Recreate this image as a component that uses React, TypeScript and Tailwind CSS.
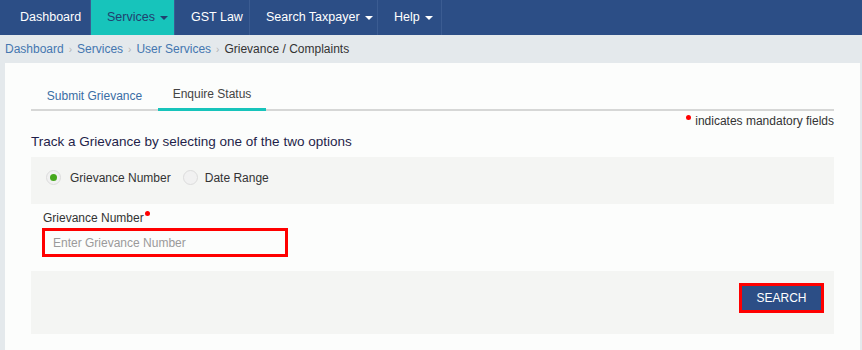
const navItems = [
  { label: 'Dashboard', width: 'w-[91px] pl-[20px]', caret: false, active: false },
  { label: 'Services', width: 'w-[84px] pl-[16px]', caret: true, active: true },
  { label: 'GST Law', width: 'w-[75px] pl-[16px]', caret: false, active: false },
  { label: 'Search Taxpayer', width: 'w-[128px] pl-[16px]', caret: true, active: false },
  { label: 'Help', width: 'w-[64px] pl-[16px]', caret: true, active: false },
];

const crumbs = ['Dashboard', 'Services', 'User Services'];

function Caret() {
  return <span className="ml-[5px] inline-block h-0 w-0 border-x-[4px] border-t-[4px] border-x-transparent border-t-current align-middle" />;
}

function Radio({ checked }: { checked?: boolean }) {
  return (
    <span className="flex h-[15px] w-[15px] items-center justify-center rounded-full border border-[#dcdcdc] bg-[#f1f1f1]">
      {checked && <span className="h-[7px] w-[7px] rounded-full bg-[#45a81c]" />}
    </span>
  );
}

function RedDot() {
  return <span className="block h-[5px] w-[5px] rounded-full bg-[#ff0000]" />;
}

export default function App() {
  return (
    <div className="min-h-[350px] bg-[#e4e9ec] font-['Liberation_Sans',Arial,sans-serif] text-[12px]">
      <nav className="flex h-[35px] bg-[#2c4e86] text-[12.5px] text-white">
        {navItems.map((item) => (
          <div
            key={item.label}
            className={`flex ${item.width} items-center border-r border-[#3b5c92] ${item.active ? 'bg-[#17c4bb] text-[#21406f]' : ''}`}
          >
            {item.label}
            {item.caret && <Caret />}
          </div>
        ))}
      </nav>

      <div className="flex h-[28px] items-center px-[5px] text-[12px]">
        {crumbs.map((c) => (
          <span key={c} className="flex items-center">
            <span className="text-[#4577b0]">{c}</span>
            <span className="mx-[5px] text-[10px] text-[#b5b5b5]">›</span>
          </span>
        ))}
        <span className="text-[#333]">Grievance / Complaints</span>
      </div>

      <div className="ml-[5px] mr-[2px] bg-[#fcfdfc] px-[26px] pb-[16px] pt-[17px]">
        <div className="flex h-[31px] border-b-2 border-[#d6d7d6] text-[12px]">
          <div className="flex w-[127px] items-center justify-center pt-[2px] text-[#3a6ea5]">Submit Grievance</div>
          <div className="-mb-[2px] flex w-[108px] items-center justify-center border-b-[3px] border-[#17c4bb] text-[#444]">
            Enquire Status
          </div>
        </div>

        <div className="mt-[3px] flex items-start justify-end gap-[4px] text-[12px] leading-[15px] text-[#333]">
          <span className="pt-[1px]">
            <RedDot />
          </span>
          indicates mandatory fields
        </div>

        <div className="mt-[4px] text-[13.5px] leading-[17px] text-[#1f1f4a]">Track a Grievance by selecting one of the two options</div>

        <div className="mt-[7px] flex h-[47px] items-center bg-[#f4f5f3] px-[15px] pb-[6px] text-[12px] text-[#333]">
          <Radio checked />
          <span className="ml-[9px]">Grievance Number</span>
          <span className="ml-[12px]">
            <Radio />
          </span>
          <span className="ml-[7px]">Date Range</span>
        </div>

        <div className="px-[11px] pb-[14px] pt-[7px]">
          <div className="flex items-start gap-[1px] pl-[1px] text-[12px] leading-[15px] text-[#333]">
            Grievance Number
            <RedDot />
          </div>
          <input
            className="mt-[2px] block h-[29px] w-[246px] border-[3px] border-[#ff0000] bg-transparent px-[8px] text-[12px] outline-none placeholder:text-[#9a9a9a]"
            placeholder="Enter Grievance Number"
          />
        </div>

        <div className="flex h-[63px] items-start justify-end bg-[#f4f5f3] pr-[10px] pt-[12px]">
          <button className="h-[30px] w-[85px] border-[3px] border-[#ff0000] bg-[#2c4e86] text-[12px] text-white">SEARCH</button>
        </div>
      </div>
    </div>
  );
}
